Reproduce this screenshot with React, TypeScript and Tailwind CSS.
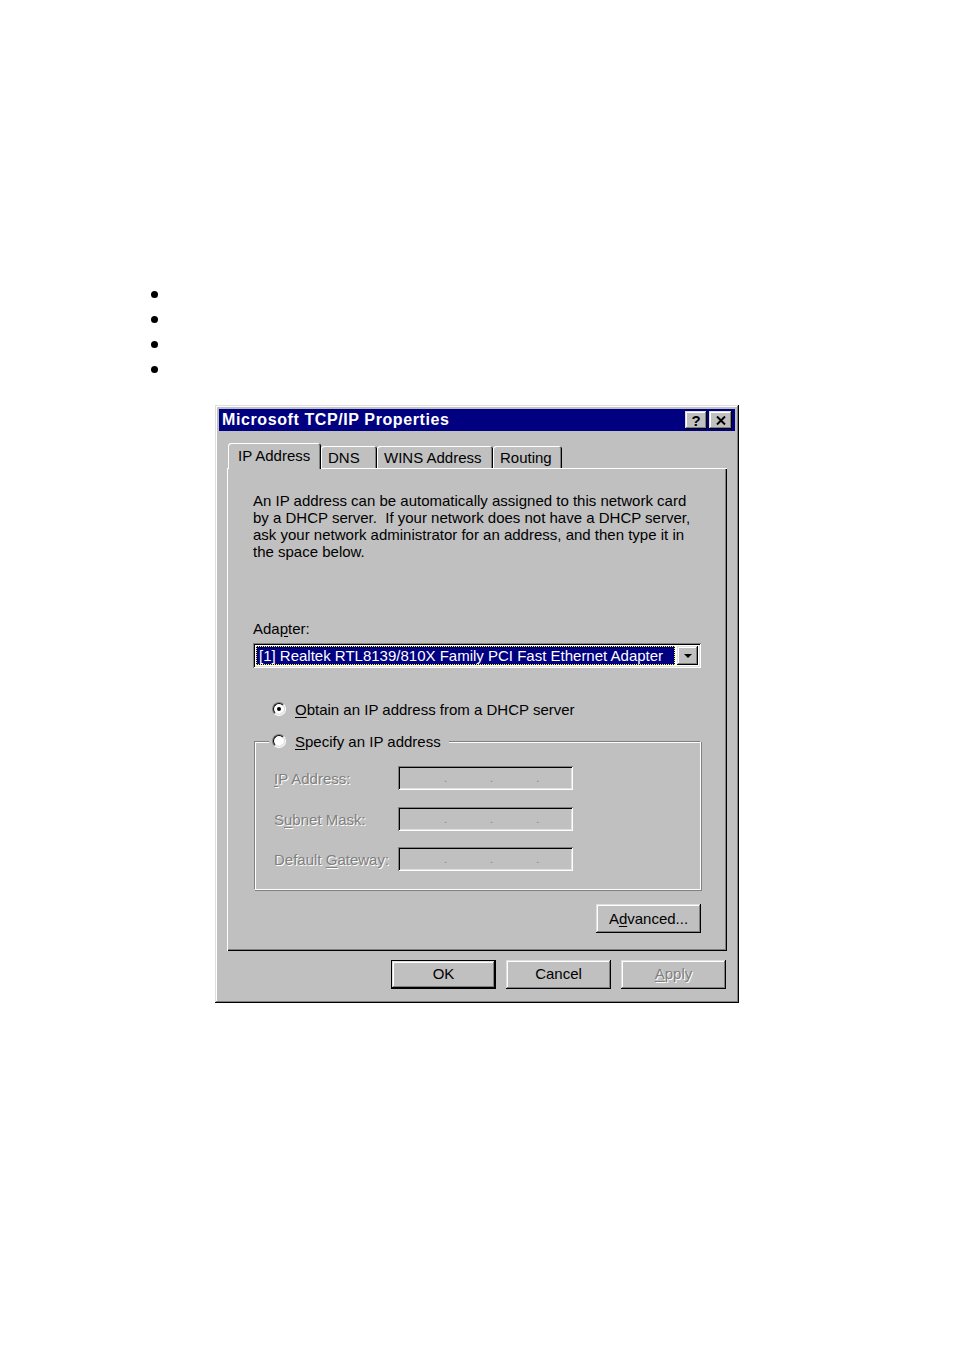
import React from "react";

// Win95 style bevels
const raised =
  "shadow-[inset_-1px_-1px_0_#000,inset_1px_1px_0_#dfdfdf,inset_-2px_-2px_0_#808080,inset_2px_2px_0_#fff]";
const sunken =
  "shadow-[inset_1px_1px_0_#808080,inset_-1px_-1px_0_#fff,inset_2px_2px_0_#000,inset_-2px_-2px_0_#dfdfdf]";
const disabledText = "text-[#808080] [text-shadow:1px_1px_0_#fff]";

function U({ children }: { children: React.ReactNode }) {
  return <span className="underline underline-offset-2">{children}</span>;
}

function Radio({ checked }: { checked?: boolean }) {
  return (
    <div className="h-[14px] w-[14px] rounded-full border border-t-[#808080] border-l-[#808080] border-b-white border-r-white">
      <div className="flex h-full w-full items-center justify-center rounded-full border border-t-black border-l-black border-b-[#dfdfdf] border-r-[#dfdfdf] bg-white">
        {checked && <div className="h-[4px] w-[4px] rounded-full bg-black" />}
      </div>
    </div>
  );
}

function Button({
  children,
  isDefault,
  disabled,
}: {
  children: React.ReactNode;
  isDefault?: boolean;
  disabled?: boolean;
}) {
  return (
    <div
      className={`h-[29px] w-[105px] bg-[#c0c0c0] ${isDefault ? "border border-black" : ""}`}
    >
      <div
        className={`flex h-full w-full items-center justify-center text-[15px] ${raised} ${disabled ? disabledText : "text-black"}`}
      >
        {children}
      </div>
    </div>
  );
}

function IpField() {
  return (
    <div className={`flex h-[24px] w-[175px] items-center bg-[#c0c0c0] ${sunken}`}>
      <div className="ml-[46px] flex gap-[43px] text-[11px] leading-none text-[#808080]">
        <span>.</span>
        <span>.</span>
        <span>.</span>
      </div>
    </div>
  );
}

function Tab({
  label,
  width,
  selected,
}: {
  label: string;
  width: number;
  selected?: boolean;
}) {
  return (
    <div
      className={`flex items-start rounded-t-[3px] bg-[#c0c0c0] pl-[7px] text-[15px] shadow-[inset_1px_1px_0_#fff,inset_-1px_0_0_#000,inset_-2px_0_0_#808080] ${
        selected ? "relative z-10 -mb-px h-[26px] pt-[2px] pl-[10px]" : "h-[22px] pt-[1px]"
      }`}
      style={{ width }}
    >
      {label}
    </div>
  );
}

export default function App() {
  return (
    <div className="min-h-[1350px] bg-white pt-[291px] font-['Liberation_Sans',Arial,sans-serif] text-black">
      {/* bullets */}
      <div className="ml-[151px] flex flex-col gap-[18px]">
        <div className="h-[7px] w-[7px] rounded-full bg-black" />
        <div className="h-[7px] w-[7px] rounded-full bg-black" />
        <div className="h-[7px] w-[7px] rounded-full bg-black" />
        <div className="h-[7px] w-[7px] rounded-full bg-black" />
      </div>

      {/* dialog */}
      <div className={`ml-[215px] mt-[32px] h-[598px] w-[524px] bg-[#c0c0c0] p-[4px] ${raised}`}>
        {/* title bar */}
        <div className="flex h-[22px] items-center justify-between bg-[#000080] pl-[3px] pr-[3px]">
          <span className="text-[16px] font-bold tracking-[0.6px] text-white">
            Microsoft TCP/IP Properties
          </span>
          <div className="flex gap-[2px]">
            <div className={`flex h-[18px] w-[22px] items-center justify-center bg-[#c0c0c0] text-[15px] font-bold leading-none ${raised}`}>
              ?
            </div>
            <div className={`flex h-[18px] w-[23px] items-center justify-center bg-[#c0c0c0] ${raised}`}>
              <svg width="10" height="9" viewBox="0 0 10 9">
                <path d="M1 0.5 L9 8.5 M9 0.5 L1 8.5" stroke="#000" strokeWidth="2" />
              </svg>
            </div>
          </div>
        </div>

        {/* tabs */}
        <div className="mx-[8px] mt-[12px]">
          <div className="flex items-end pl-px">
            <Tab label="IP Address" width={93} selected />
            <Tab label="DNS" width={56} />
            <Tab label="WINS Address" width={116} />
            <Tab label="Routing" width={69} />
          </div>

          {/* panel */}
          <div className="h-[483px] bg-[#c0c0c0] px-[26px] pt-[24px] text-[15px] leading-[17px] shadow-[inset_1px_1px_0_#fff,inset_-1px_-1px_0_#000,inset_-2px_-2px_0_#808080]">
            <p className="whitespace-nowrap">
              An IP address can be automatically assigned to this network card
              <br />
              by a DHCP server.&nbsp; If your network does not have a DHCP server,
              <br />
              ask your network administrator for an address, and then type it in
              <br />
              the space below.
            </p>

            <div className="mt-[60px]">
              Ada<U>p</U>ter:
            </div>

            {/* adapter dropdown */}
            <div className={`mt-[6px] flex h-[25px] w-[448px] items-center bg-white p-[3px] ${sunken}`}>
              <div className="flex h-[19px] flex-1 items-center border border-dotted border-[#ffff00] bg-[#000080] pl-[2px] text-[15px] whitespace-nowrap text-white">
                [1] Realtek RTL8139/810X Family PCI Fast Ethernet Adapter
              </div>
              <div className={`ml-[2px] flex h-[19px] w-[21px] items-center justify-center bg-[#c0c0c0] ${raised}`}>
                <svg width="8" height="4" viewBox="0 0 8 4">
                  <path d="M0 0 H8 L4 4 Z" fill="#000" />
                </svg>
              </div>
            </div>

            {/* obtain radio */}
            <div className="ml-[19px] mt-[32px] flex h-[18px] items-center gap-[9px]">
              <Radio checked />
              <span>
                <U>O</U>btain an IP address from a DHCP server
              </span>
            </div>

            {/* specify group */}
            <div className="relative ml-px mt-[23px] h-[149px] w-[447px] border border-t-[#808080] border-l-[#808080] border-b-white border-r-white shadow-[inset_1px_1px_0_#fff,1px_1px_0_#808080]">
              <div className="absolute -top-[10px] left-[14px] flex h-[18px] items-center gap-[9px] bg-[#c0c0c0] pl-[3px] pr-[8px]">
                <Radio />
                <span>
                  <U>S</U>pecify an IP address
                </span>
              </div>

              <div className="flex flex-col pl-[19px] pt-[24px]">
                <div className="flex h-[24px] items-center">
                  <span className={`w-[124px] ${disabledText}`}>
                    <U>I</U>P Address:
                  </span>
                  <IpField />
                </div>
                <div className="mt-[17px] flex h-[24px] items-center">
                  <span className={`w-[124px] ${disabledText}`}>
                    S<U>u</U>bnet Mask:
                  </span>
                  <IpField />
                </div>
                <div className="mt-[16px] flex h-[24px] items-center">
                  <span className={`w-[124px] whitespace-nowrap ${disabledText}`}>
                    Default <U>G</U>ateway:
                  </span>
                  <IpField />
                </div>
              </div>
            </div>

            <div className="mt-[14px] flex w-[448px] justify-end">
              <Button>
                A<U>d</U>vanced...
              </Button>
            </div>
          </div>

          {/* footer buttons */}
          <div className="mt-[9px] flex justify-end gap-[10px] pr-px">
            <Button isDefault>OK</Button>
            <Button>Cancel</Button>
            <Button disabled>
              <U>A</U>pply
            </Button>
          </div>
        </div>
      </div>
    </div>
  );
}
